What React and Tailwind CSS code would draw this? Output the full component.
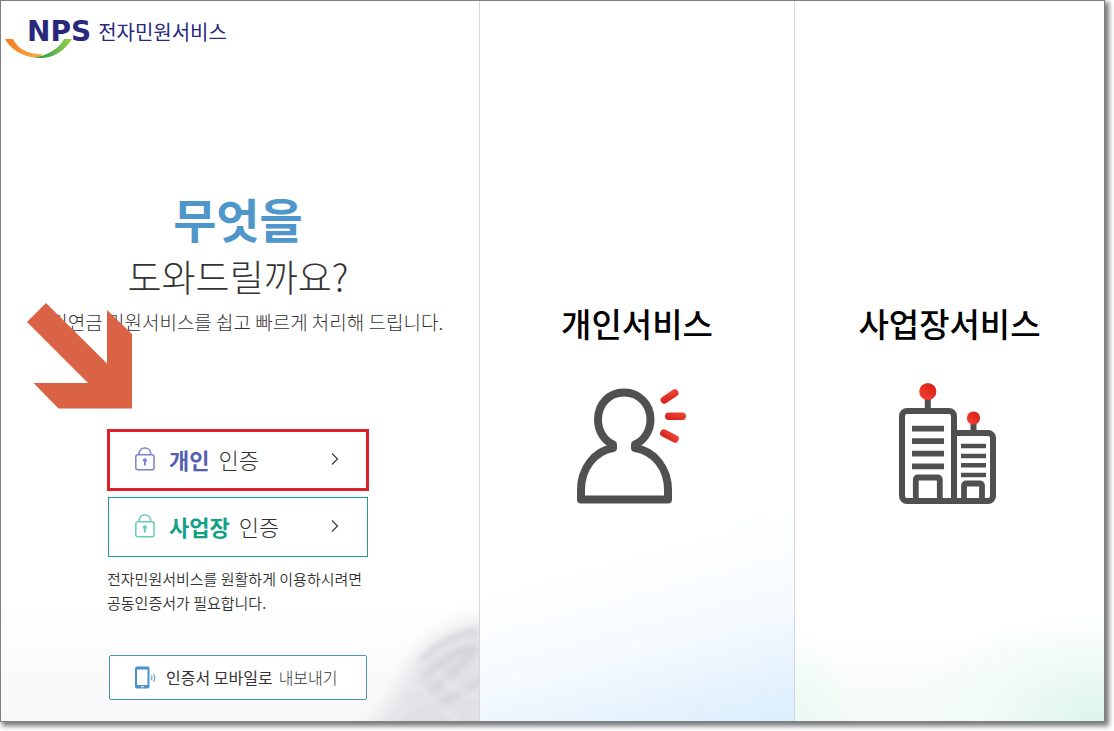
import React from 'react'

// Lock icon
const LockIcon = ({ className }) => (
    <svg className={className} width="20" height="24" viewBox="0 0 20 24" fill="none" stroke="currentColor" strokeWidth="1.5" aria-hidden="true">
        <rect x="0.8" y="7.7" width="18.2" height="15" rx="2"/>
        <path d="M4 7.7C4 3.6 6.4 1 9.9 1s5.9 2.6 5.9 6.7"/>
        <circle cx="9.9" cy="13.2" r="2" fill="currentColor" stroke="none"/>
        <path d="M9.9 13v5.6" strokeWidth="1.8"/>
    </svg>
)

// Thin chevron
const Chevron = () => (
    <svg width="8" height="14" viewBox="0 0 8 14" fill="none" stroke="#333333" strokeWidth="1.1" aria-hidden="true">
        <path d="M1 1.500L6.500 7L1 12.500"/>
    </svg>
)

// Phone icon
const PhoneIcon = () => (
    <svg width="21" height="23" viewBox="0 0 21 23" fill="none" aria-hidden="true">
        <path fillRule="evenodd" fill="#4b92c8" d="M2 0.500h10.500a2 2 0 0 1 2 2v18a2 2 0 0 1-2 2H2a2 2 0 0 1-2-2v-18a2 2 0 0 1 2-2zM2 3.500v15.500h10.500V3.500zM5.800 20.200v1h3v-1z"/>
        <path d="M16.200 9.500q1.500 2.200 0 4.500M18.300 7.800q2.800 4 0 7.900" stroke="#6ba6d3" strokeWidth="1.200"/>
    </svg>
)

// Person icon
const PersonIcon = () => (
    <svg width="112" height="117" viewBox="0 0 112 117" fill="none" aria-hidden="true">
        <defs>
            <linearGradient id="mark" x1="0" y1="1" x2="1" y2="0">
                <stop offset="0" stopColor="#cc1f16"/>
                <stop offset="1" stopColor="#f84a38"/>
            </linearGradient>
        </defs>
        <path d="M37 60v-3.500C29 53 22 44 22 31.500C22 16 33 4.500 48 4.500s26.500 11.500 26.500 27C74.500 44 67 53 59 56.500V60C78 63 92 80 92 102v9.500H5V102C5 80 19 63 37 60z" stroke="#505050" strokeWidth="8" strokeLinejoin="round"/>
        <g fill="url(#mark)">
            <rect x="-10" y="-3.700" width="20" height="7.400" rx="3.700" transform="translate(93.500 8.500) rotate(-34)"/>
            <rect x="89" y="24.500" width="21" height="7.400" rx="3.700"/>
            <rect x="-10" y="-3.700" width="20" height="7.400" rx="3.700" transform="translate(93.500 48) rotate(27)"/>
        </g>
    </svg>
)

// Building icon
const BuildingIcon = () => (
    <svg width="98" height="123" viewBox="0 0 98 123" fill="none" aria-hidden="true">
        <defs>
            <linearGradient id="lamp" x1="0" y1="1" x2="1" y2="0">
                <stop offset="0" stopColor="#fb4334"/>
                <stop offset="1" stopColor="#cf1c12"/>
            </linearGradient>
        </defs>
        <g stroke="#505050" strokeWidth="6">
            <path d="M28.800 15v12M74.500 40v10"/>
            <path d="M55 118.800V34a5 5 0 0 0-5-5H8a5 5 0 0 0-5 5v80a5 5 0 0 0 5 5h81a5 5 0 0 0 5-5V56a5 5 0 0 0-5-5H55"/>
            <path d="M16.800 118V97.500a2 2 0 0 1 2-2h20a2 2 0 0 1 2 2V118M65 118v-14.500a2 2 0 0 1 2-2h14a2 2 0 0 1 2 2V118" strokeWidth="5.800"/>
        </g>
        <path d="M13 46.700h32M13 59.200h32M13 71.700h32M13 84.300h32" stroke="#505050" strokeWidth="5.800"/>
        <path d="M62 64h25M62 74h25M62 83.300h25M62 93h25" stroke="#505050" strokeWidth="4.600"/>
        <circle cx="28.800" cy="9.500" r="8.600" fill="url(#lamp)"/>
        <circle cx="74.500" cy="36" r="6.600" fill="url(#lamp)"/>
    </svg>
)

// Soft hair in the corner of the intro
const HairBackdrop = () => (
    <svg className="absolute right-0 bottom-0 pointer-events-none" width="150" height="120" viewBox="0 0 150 120" fill="none" aria-hidden="true">
        <defs>
            <filter id="soft" x="-30%" y="-30%" width="160%" height="160%">
                <feGaussianBlur stdDeviation="11"/>
            </filter>
            <filter id="strand" x="-30%" y="-30%" width="160%" height="160%">
                <feGaussianBlur stdDeviation="3"/>
            </filter>
        </defs>
        <path d="M24 145C55 124 68 92 82 68C94 48 114 28 164 18V145z" fill="#e0dfe3" filter="url(#soft)"/>
        <g strokeWidth="3" filter="url(#strand)">
            <path d="M92 60C108 42 130 32 148 30M96 76C114 58 130 46 150 48M100 94L144 52M108 104C122 96 140 90 152 78" stroke="#c6c5cb"/>
            <path d="M80 86C96 84 116 112 130 122M106 72C120 80 130 92 150 96M66 120C78 108 90 100 98 98" stroke="#eeedf1"/>
        </g>
    </svg>
)

// Red arrow
const Arrow = () => (
    <svg className="absolute top-[301px] left-6 pointer-events-none" width="108" height="108" viewBox="0 0 108 108" aria-hidden="true">
        <path d="M21 1L2 20L63 81H8.500L33.500 106.500H107V32L82 8V61.500z" fill="#d96344"/>
    </svg>
)

const services = [
    { name: '개인서비스', icon: <PersonIcon/>, bg: 'bg-[linear-gradient(165deg,transparent_72%,#f6fbff_85%,#dbedfd_100%)]', iconBox: 'pr-[11px]' },
    { name: '사업장서비스', icon: <BuildingIcon/>, bg: 'bg-[radial-gradient(200px_110px_at_bottom_right,#dcf5ea_0%,#f2fbf6_60%,transparent_100%),radial-gradient(60px_90px_at_bottom_left,#eafaf1_0%,transparent_100%),linear-gradient(transparent_87%,#f3faf7_100%)]', iconBox: 'pr-[3px]' },
]

export default function App() {
    return (
        <div className="min-h-screen flex pr-[9px] pb-[9px] bg-white font-['Noto_Sans_CJK_KR',sans-serif] text-[#333333]">
            <main className="grow grid grid-cols-[478fr_315fr_310fr] border border-[#808080] shadow-[3px_3px_5px_1px_#777777]">

                {/* Intro */}
                <section className="relative flex flex-col bg-[linear-gradient(transparent_83%,#f8f8fa_100%)]">
                    <HairBackdrop/>
                    <header className="h-[60px] pt-[15px] pl-[26px]">
                        <a href="#home" className="relative flex items-center gap-[7px] h-8 text-[#28287d]">
                            <svg className="absolute top-[22px] -left-[22px]" width="68" height="21" viewBox="0 0 68 21" aria-hidden="true">
                                <defs>
                                    <linearGradient id="orange" x1="0" x2="1">
                                        <stop offset="0" stopColor="#f37a20"/>
                                        <stop offset="1" stopColor="#fbb040"/>
                                    </linearGradient>
                                    <linearGradient id="green" x1="0" x2="1">
                                        <stop offset="0" stopColor="#159447"/>
                                        <stop offset="1" stopColor="#9bd04b"/>
                                    </linearGradient>
                                </defs>
                                <path d="M0 1h8C13 11 22 16 38 16.500Q34 20 30 19.500C15 18 5 10 0 1z" fill="url(#orange)"/>
                                <path d="M28 19.500C42 18 54 11 59 1h8C60 13 48 20 36 20z" fill="url(#green)"/>
                            </svg>
                            <span className="relative font-['DejaVu_Sans',sans-serif] font-bold text-[28px] leading-8">NPS</span>
                            <span className="text-xl leading-8">전자민원서비스</span>
                        </a>
                    </header>

                    <div className="relative flex flex-col items-center pt-[127px] pr-1">
                        <h1 className="flex flex-col items-center">
                            <span className="font-bold text-[47px] leading-[60px] text-[#4f96cb]">무엇을</span>
                            <span className="font-light text-[37px] leading-[56px]">도와드릴까요?</span>
                        </h1>
                        <p className="font-light text-[19px] leading-9">국민연금 민원서비스를 쉽고 빠르게 처리해 드립니다.</p>

                        <div className="w-[262px] mt-[89px] flex flex-col gap-[6px]">
                            <button className="h-[62px] flex items-center pl-[25px] pr-[27px] pb-[2px] bg-white border-3 border-[#de2028] cursor-pointer">
                                <LockIcon className="text-[#7b82cb]"/>
                                <span className="grow flex gap-[9px] pl-[14px] text-left font-light text-[22px] leading-8"><b className="font-bold text-[#5560b0]">개인</b> 인증</span>
                                <Chevron/>
                            </button>
                            <button className="h-[60px] mx-px flex items-center pl-[26px] pr-7 pb-[2px] bg-white border border-[#1c9c8c] cursor-pointer">
                                <LockIcon className="text-[#66cdb4]"/>
                                <span className="grow flex gap-[9px] pl-[14px] text-left font-light text-[22px] leading-8"><b className="font-bold text-[#14a085]">사업장</b> 인증</span>
                                <Chevron/>
                            </button>
                            <p className="pt-1 text-[15px] leading-6 font-[350] whitespace-nowrap">
                                전자민원서비스를 원활하게 이용하시려면<br/>
                                공동인증서가 필요합니다.
                            </p>
                        </div>

                        <button className="w-[258px] h-[45px] mt-10 flex items-center pl-[25px] gap-[10px] bg-white border border-[#4d90b8] rounded-xs text-base font-light cursor-pointer">
                            <PhoneIcon/>
                            <span className="flex gap-[6px] pb-[2px]"><b className="font-normal">인증서 모바일로</b> 내보내기</span>
                        </button>
                    </div>
                    <Arrow/>
                </section>

                {/* Services */}
                {services.map(service => (
                    <a key={service.name} href="#service" className={`flex flex-col items-center pt-[298px] border-l border-[#d5d7dc] ${service.bg}`}>
                        <h2 className="font-medium text-[33px] leading-12 text-black">{service.name}</h2>
                        <div className={`h-[123px] mt-[35px] flex items-end ${service.iconBox}`}>
                            {service.icon}
                        </div>
                    </a>
                ))}
            </main>
        </div>
    )
}
